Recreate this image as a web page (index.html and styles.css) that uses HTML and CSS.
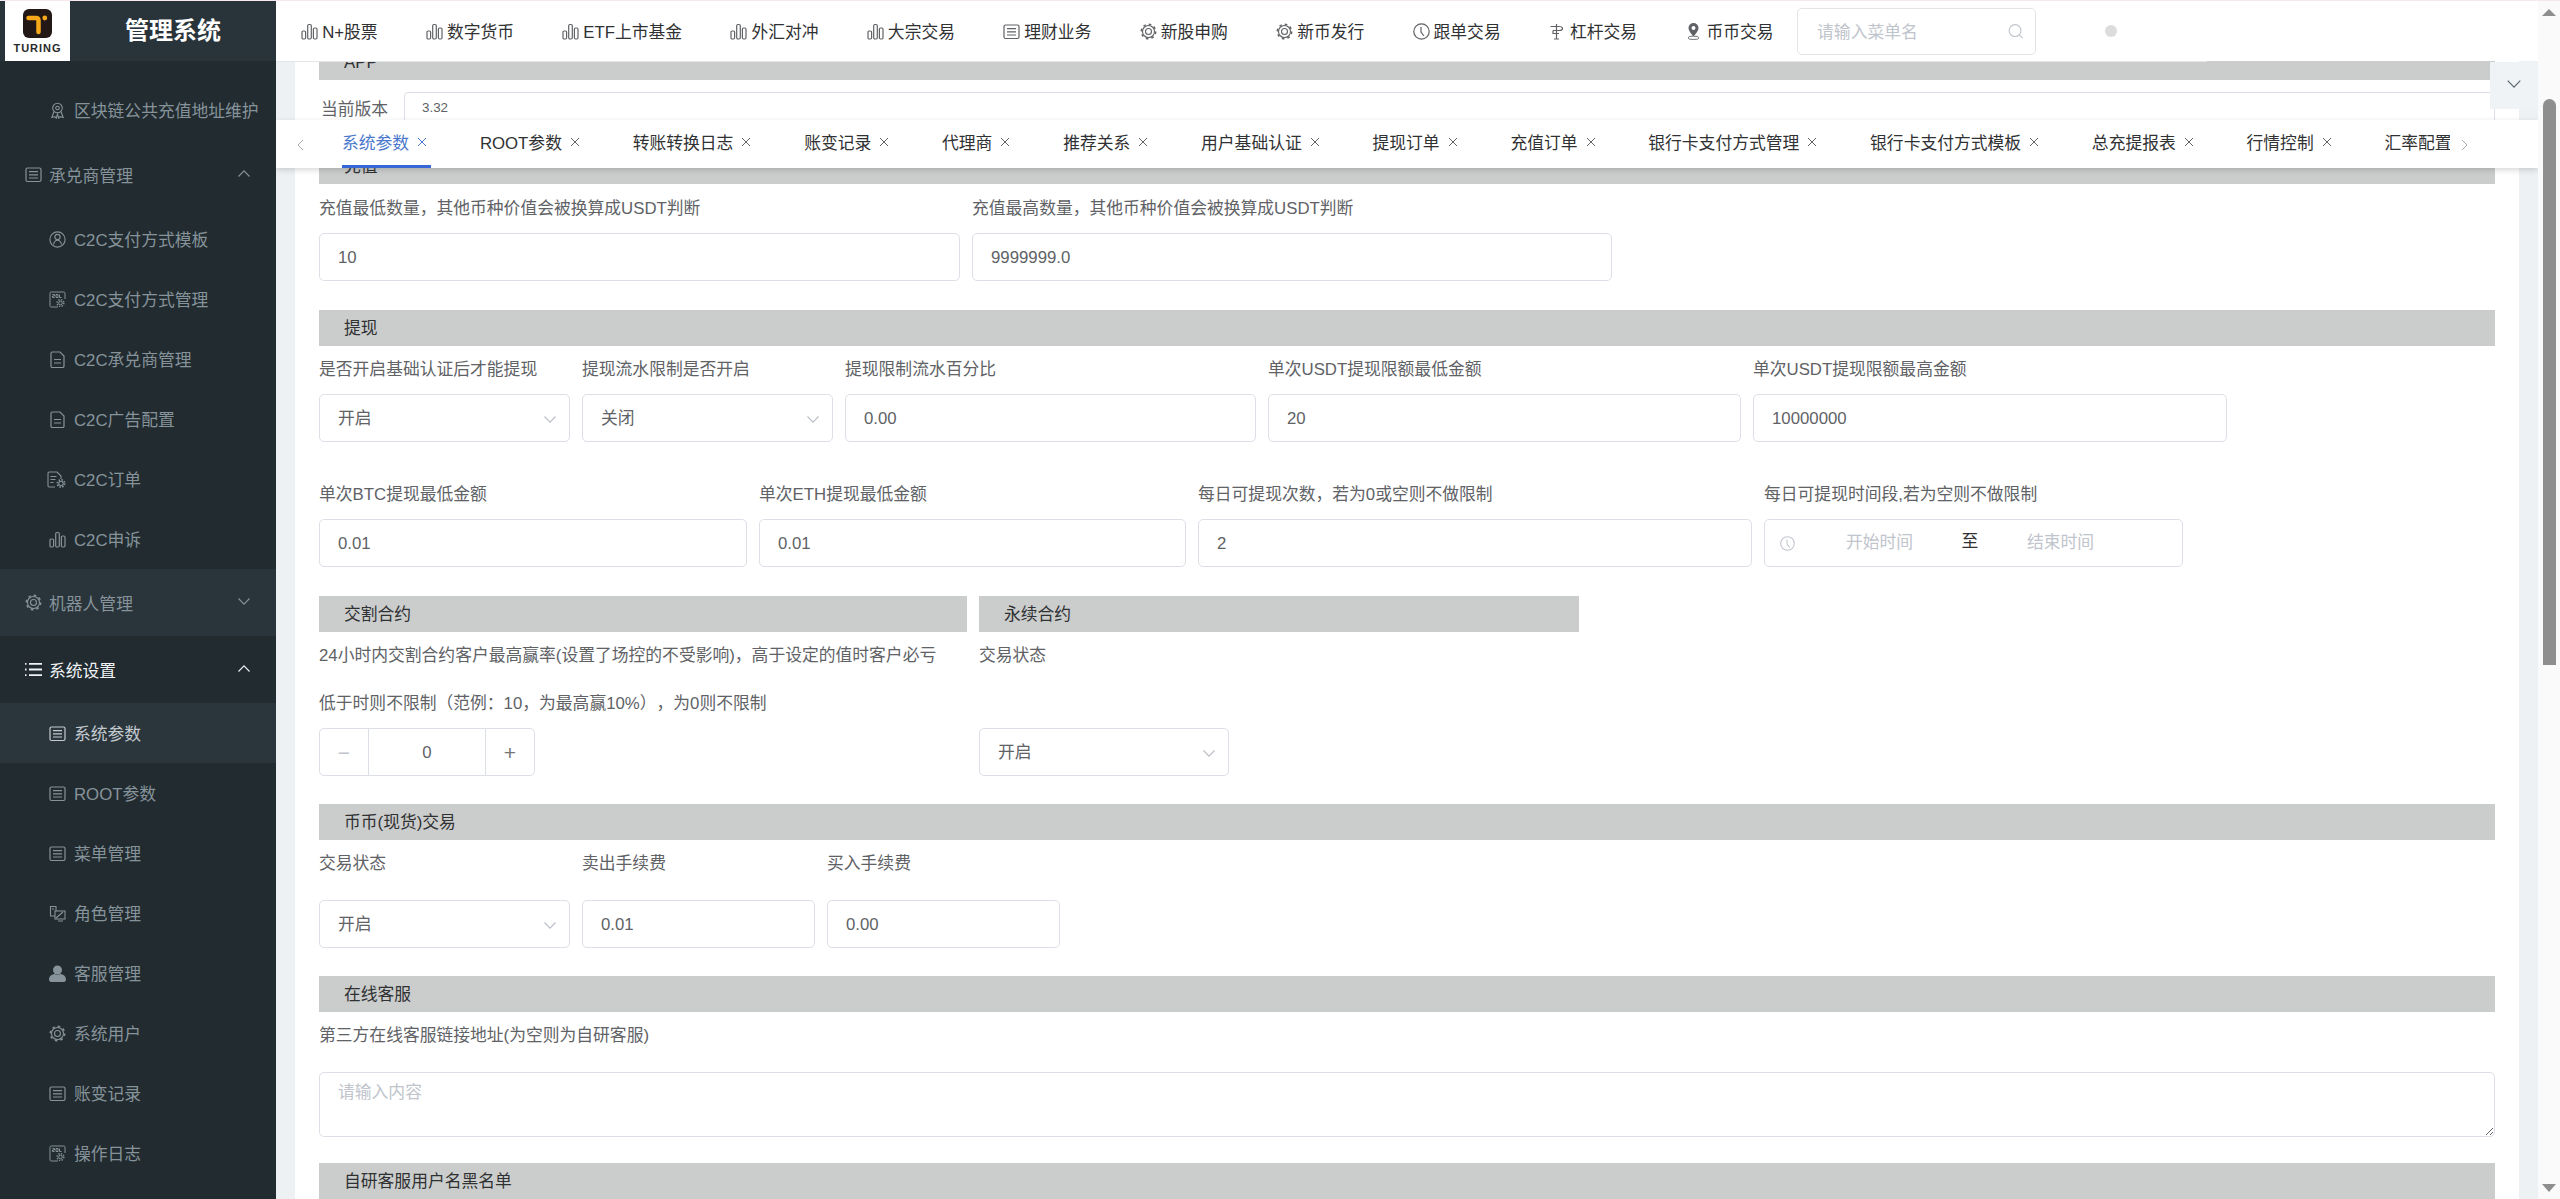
FILE: index.html
```html
<!DOCTYPE html>
<html lang="zh-CN">
<head>
  <meta charset="UTF-8">
  <title>管理系统</title>
  <link rel="stylesheet" href="styles.css">
</head>
<body>
  <svg class="defs" width="0" height="0">
    <symbol id="i-bars" viewBox="0 0 17 17"><g fill="none" stroke="currentColor" stroke-width="1.2"><rect x="1" y="8" width="3.6" height="8" rx="1.2"/><rect x="6.7" y="1.5" width="3.6" height="14.5" rx="1.2"/><rect x="12.4" y="5" width="3.6" height="11" rx="1.2"/></g></symbol>
    <symbol id="i-list" viewBox="0 0 17 17"><g fill="none" stroke="currentColor" stroke-width="1.2"><rect x="1" y="2" width="15" height="13.5" rx="1.5"/><path d="M4 5.6h9M4 8.8h9M4 12h9"/></g></symbol>
    <symbol id="i-doc" viewBox="0 0 17 17"><g fill="none" stroke="currentColor" stroke-width="1.2"><path d="M2 2.2c0-.7.5-1.2 1.2-1.2H11l4 4v10.3c0 .7-.5 1.2-1.2 1.2H3.200c-.7 0-1.200-.5-1.200-1.200z"/><path d="M5 8.500h7M5 12h7"/></g></symbol>
    <symbol id="i-docgear" viewBox="0 0 20 17"><g fill="none" stroke="currentColor" stroke-width="1.1"><path d="M8 16H2.200C1.500 16 1 15.500 1 14.800V2.200C1 1.500 1.500 1 2.200 1H10l4 4v3"/><path d="M3.500 5.500h6M3.500 8.500h5M3.500 11.500h3"/><circle cx="14" cy="12.500" r="2.200"/><circle cx="14" cy="12.500" r="3.700" stroke-width="1.600" stroke-dasharray="1.500 1.400"/></g></symbol>
    <symbol id="i-gear" viewBox="0 0 17 17"><g fill="none" stroke="currentColor"><circle cx="8.500" cy="8.500" r="3" stroke-width="1.100"/><circle cx="8.500" cy="8.500" r="6" stroke-width="1.100"/><circle cx="8.500" cy="8.500" r="7.200" stroke-width="1.500" stroke-dasharray="2.600 3.055"/></g></symbol>
    <symbol id="i-medal" viewBox="0 0 17 17"><g fill="none" stroke="currentColor" stroke-width="1.100"><circle cx="8.500" cy="6" r="4.800"/><circle cx="8.500" cy="6" r="1.800"/><path d="M5 9.500L2.800 15.500l3-.8 1.500 1.500L8.500 12l1.200 4.200 1.500-1.500 3 .8L12 9.500"/></g></symbol>
    <symbol id="i-person" viewBox="0 0 17 17"><g fill="none" stroke="currentColor" stroke-width="1.100"><circle cx="8.500" cy="8.500" r="7.600"/><circle cx="8.500" cy="6" r="2.600"/><path d="M4.500 13.500c.6-2.600 2.100-4.200 4-4.200s3.400 1.600 4 4.200"/></g></symbol>
    <symbol id="i-sql" viewBox="0 0 17 17"><g fill="none" stroke="currentColor" stroke-width="1"><path d="M9 16H2.200C1.500 16 1 15.500 1 14.800V2.200C1 1.500 1.500 1 2.200 1h12.600c.7 0 1.200.5 1.200 1.200V8"/><path d="M3.500 3.500h2v1.500h-2v1.500h2M7 3.500h2v3H7zM10.500 3.500v3h2"/><circle cx="11.500" cy="12" r="1.800"/><circle cx="11.500" cy="12" r="3.400" stroke-width="1.400" stroke-dasharray="1.400 1.270"/></g></symbol>
    <symbol id="i-role" viewBox="0 0 17 17"><g fill="none" stroke="currentColor" stroke-width="1.100"><path d="M6 11H1.500V1.500h5.500V6"/><rect x="6" y="6" width="10" height="8"/><path d="M7 13l7-6M9 16h5M3 4h2"/></g></symbol>
    <symbol id="i-user" viewBox="0 0 17 17"><circle cx="8.500" cy="5" r="4.500" fill="currentColor"/><path d="M0 14.500C0 11 3 9.300 5.500 9c1.800 1.100 4.200 1.100 6 0 2.500.3 5.500 2 5.500 5.500 0 1.400-1 2.500-2 2.500H2c-1 0-2-1.100-2-2.500z" fill="currentColor"/></symbol>
    <symbol id="i-clock" viewBox="0 0 17 17"><g fill="none" stroke="currentColor" stroke-width="1.200"><circle cx="8.500" cy="8.500" r="7.700"/><path d="M8 4v5l3 4"/></g></symbol>
    <symbol id="i-lever" viewBox="0 0 17 17"><g fill="none" stroke="currentColor" stroke-width="1.200"><path d="M7.500 1v15M5 16h5M1.500 3.500h8.500c2 0 3.500.8 3.500 2s-1.500 2-3.500 2H4M4 7.500v3h6"/></g></symbol>
    <symbol id="i-pin" viewBox="0 0 17 17"><path d="M8.500 0a5 5 0 0 0-5 5c0 3 3.500 6.500 5 8.500 1.500-2 5-5.500 5-8.500a5 5 0 0 0-5-5zm0 3a2 2 0 1 1 0 4 2 2 0 0 1 0-4z" fill="currentColor"/><ellipse cx="8.500" cy="14.800" rx="5.500" ry="1.700" fill="none" stroke="currentColor" stroke-width=".9"/></symbol>
    <symbol id="i-close" viewBox="0 0 10 10"><path d="M1 1l8 8M9 1L1 9" fill="none" stroke="currentColor" stroke-width="1"/></symbol>
    <symbol id="i-down" viewBox="0 0 12 7"><path d="M.5.500L6 6.200 11.500.5" fill="none" stroke="currentColor" stroke-width="1.100"/></symbol>
    <symbol id="i-up" viewBox="0 0 12 7"><path d="M.5 6.500L6 .8l5.500 5.700" fill="none" stroke="currentColor" stroke-width="1.100"/></symbol>
    <symbol id="i-left" viewBox="0 0 7 12"><path d="M6 1L1 6l5 5" fill="none" stroke="currentColor" stroke-width="1"/></symbol>
    <symbol id="i-right" viewBox="0 0 7 12"><path d="M1 1l5 5-5 5" fill="none" stroke="currentColor" stroke-width="1"/></symbol>
    <symbol id="i-search" viewBox="0 0 17 17"><g fill="none" stroke="currentColor" stroke-width="1.200"><circle cx="7.500" cy="7.500" r="6.300"/><path d="M12 12l3.500 3.500"/></g></symbol>
  </svg>

  <div class="topline"></div>

  <div class="app">
    <aside class="side">
      <div class="brand">
        <div class="logo">
          <svg class="logo-mark" viewBox="0 0 29 29">
            <rect width="29" height="29" rx="6" fill="#231815"/>
            <path d="M5.500 9H13c1.500 0 2.500 1 2.500 2.500V23" fill="none" stroke="#f9a81a" stroke-width="4.500" stroke-linecap="round"/>
            <circle cx="21.800" cy="9" r="2.400" fill="#f9a81a"/>
          </svg>
          <span class="logo-name">TURING</span>
        </div>
        <div class="brand-title">管理系统</div>
      </div>

      <ul class="menu">
        <li class="child"><svg class="ic"><use href="#i-medal"/></svg>区块链公共充值地址维护</li>
        <li class="parent first"><svg class="ic"><use href="#i-list"/></svg>承兑商管理<svg class="chev"><use href="#i-up"/></svg></li>
        <li class="child"><svg class="ic"><use href="#i-person"/></svg>C2C支付方式模板</li>
        <li class="child"><svg class="ic"><use href="#i-sql"/></svg>C2C支付方式管理</li>
        <li class="child"><svg class="ic"><use href="#i-doc"/></svg>C2C承兑商管理</li>
        <li class="child"><svg class="ic"><use href="#i-doc"/></svg>C2C广告配置</li>
        <li class="child"><svg class="ic ic-wide"><use href="#i-docgear"/></svg>C2C订单</li>
        <li class="child"><svg class="ic"><use href="#i-bars"/></svg>C2C申诉</li>
        <li class="parent hover"><svg class="ic"><use href="#i-gear"/></svg>机器人管理<svg class="chev"><use href="#i-down"/></svg></li>
        <li class="parent open">
          <svg class="ic" viewBox="0 0 17 17"><path d="M0 2h1.500v1.800H0zM4 2h13v1.800H4zM0 7.600h1.500v1.800H0zM4 7.600h13v1.800H4zM0 13.200h1.500V15H0zM4 13.200h13V15H4z" fill="currentColor"/></svg>
          系统设置<svg class="chev"><use href="#i-up"/></svg>
        </li>
        <li class="child active"><svg class="ic"><use href="#i-list"/></svg>系统参数</li>
        <li class="child"><svg class="ic"><use href="#i-list"/></svg>ROOT参数</li>
        <li class="child"><svg class="ic"><use href="#i-list"/></svg>菜单管理</li>
        <li class="child"><svg class="ic"><use href="#i-role"/></svg>角色管理</li>
        <li class="child"><svg class="ic"><use href="#i-user"/></svg>客服管理</li>
        <li class="child"><svg class="ic"><use href="#i-gear"/></svg>系统用户</li>
        <li class="child"><svg class="ic"><use href="#i-list"/></svg>账变记录</li>
        <li class="child"><svg class="ic"><use href="#i-sql"/></svg>操作日志</li>
      </ul>
    </aside>

    <div class="main">
      <header class="topbar">
        <a class="nav-item nav-first"><svg class="ic"><use href="#i-bars"/></svg>N+股票</a>
        <a class="nav-item"><svg class="ic"><use href="#i-bars"/></svg>数字货币</a>
        <a class="nav-item"><svg class="ic"><use href="#i-bars"/></svg>ETF上市基金</a>
        <a class="nav-item"><svg class="ic"><use href="#i-bars"/></svg>外汇对冲</a>
        <a class="nav-item"><svg class="ic"><use href="#i-bars"/></svg>大宗交易</a>
        <a class="nav-item"><svg class="ic"><use href="#i-list"/></svg>理财业务</a>
        <a class="nav-item"><svg class="ic"><use href="#i-gear"/></svg>新股申购</a>
        <a class="nav-item"><svg class="ic"><use href="#i-gear"/></svg>新币发行</a>
        <a class="nav-item"><svg class="ic"><use href="#i-clock"/></svg>跟单交易</a>
        <a class="nav-item"><svg class="ic"><use href="#i-lever"/></svg>杠杆交易</a>
        <a class="nav-item"><svg class="ic"><use href="#i-pin"/></svg>币币交易</a>
        <div class="search">
          <span class="search-text">请输入菜单名</span>
          <svg class="search-ic"><use href="#i-search"/></svg>
        </div>
        <span class="dot"></span>
      </header>

      <button class="collapse"><svg><use href="#i-down"/></svg></button>

      <div class="tabs">
        <svg class="tab-arrow tab-prev"><use href="#i-left"/></svg>
        <div class="tab-strip">
          <span class="tab active">系统参数<svg class="x"><use href="#i-close"/></svg></span>
          <span class="tab">ROOT参数<svg class="x"><use href="#i-close"/></svg></span>
          <span class="tab">转账转换日志<svg class="x"><use href="#i-close"/></svg></span>
          <span class="tab">账变记录<svg class="x"><use href="#i-close"/></svg></span>
          <span class="tab">代理商<svg class="x"><use href="#i-close"/></svg></span>
          <span class="tab">推荐关系<svg class="x"><use href="#i-close"/></svg></span>
          <span class="tab">用户基础认证<svg class="x"><use href="#i-close"/></svg></span>
          <span class="tab">提现订单<svg class="x"><use href="#i-close"/></svg></span>
          <span class="tab">充值订单<svg class="x"><use href="#i-close"/></svg></span>
          <span class="tab">银行卡支付方式管理<svg class="x"><use href="#i-close"/></svg></span>
          <span class="tab">银行卡支付方式模板<svg class="x"><use href="#i-close"/></svg></span>
          <span class="tab">总充提报表<svg class="x"><use href="#i-close"/></svg></span>
          <span class="tab">行情控制<svg class="x"><use href="#i-close"/></svg></span>
          <span class="tab">汇率配置<svg class="x"><use href="#i-close"/></svg></span>
        </div>
        <svg class="tab-arrow tab-next"><use href="#i-right"/></svg>
      </div>

      <main class="card">
        <div class="bar">APP</div>
        <div class="app-row">
          <span class="app-label">当前版本</span>
          <div class="app-input">3.32</div>
        </div>

        <div class="bar bar-pay">充值</div>
        <div class="row">
          <div class="field w-641"><label>充值最低数量，其他币种价值会被换算成USDT判断</label><div class="input">10</div></div>
          <div class="field w-640"><label>充值最高数量，其他币种价值会被换算成USDT判断</label><div class="input">9999999.0</div></div>
        </div>

        <div class="bar">提现</div>
        <div class="row">
          <div class="field w-251"><label>是否开启基础认证后才能提现</label><div class="input select">开启<svg class="caret"><use href="#i-down"/></svg></div></div>
          <div class="field w-251"><label>提现流水限制是否开启</label><div class="input select">关闭<svg class="caret"><use href="#i-down"/></svg></div></div>
          <div class="field w-411"><label>提现限制流水百分比</label><div class="input">0.00</div></div>
          <div class="field w-473"><label>单次USDT提现限额最低金额</label><div class="input">20</div></div>
          <div class="field w-474"><label>单次USDT提现限额最高金额</label><div class="input">10000000</div></div>
        </div>
        <div class="row">
          <div class="field w-428"><label>单次BTC提现最低金额</label><div class="input">0.01</div></div>
          <div class="field w-427"><label>单次ETH提现最低金额</label><div class="input">0.01</div></div>
          <div class="field w-554"><label>每日可提现次数，若为0或空则不做限制</label><div class="input">2</div></div>
          <div class="field w-419">
            <label>每日可提现时间段,若为空则不做限制</label>
            <div class="input range">
              <svg class="range-ic"><use href="#i-clock"/></svg>
              <span class="range-text">开始时间</span>
              <span class="range-sep">至</span>
              <span class="range-text">结束时间</span>
            </div>
          </div>
        </div>

        <div class="row row-28">
          <div class="col w-648">
            <div class="bar">交割合约</div>
            <label class="lbl">24小时内交割合约客户最高赢率(设置了场控的不受影响)，高于设定的值时客户必亏<br>低于时则不限制（范例：10，为最高赢10%），为0则不限制</label>
            <div class="stepper">
              <span class="step step-off">−</span>
              <span class="step-val">0</span>
              <span class="step">+</span>
            </div>
          </div>
          <div class="col w-600">
            <div class="bar">永续合约</div>
            <label class="lbl lbl-2">交易状态</label>
            <div class="input select w-250">开启<svg class="caret"><use href="#i-down"/></svg></div>
          </div>
        </div>

        <div class="bar">币币(现货)交易</div>
        <div class="row row-28">
          <div class="field w-251"><label class="lbl-60">交易状态</label><div class="input select">开启<svg class="caret"><use href="#i-down"/></svg></div></div>
          <div class="field w-233"><label class="lbl-60">卖出手续费</label><div class="input">0.01</div></div>
          <div class="field w-233"><label class="lbl-60">买入手续费</label><div class="input">0.00</div></div>
        </div>

        <div class="bar">在线客服</div>
        <div class="row row-26">
          <div class="field w-full"><label class="lbl-60">第三方在线客服链接地址(为空则为自研客服)</label><textarea class="area" placeholder="请输入内容"></textarea></div>
        </div>

        <div class="bar">自研客服用户名黑名单</div>
      </main>
    </div>

    <div class="sbar">
      <span class="sbar-up"></span>
      <span class="sbar-thumb"></span>
      <span class="sbar-down"></span>
    </div>
  </div>
</body>
</html>
```

FILE: styles.css
```css
* { box-sizing: border-box; }
html, body { margin: 0; height: 1199px; overflow: hidden; }
body {
  font-family: "Liberation Sans", "Noto Sans CJK SC", sans-serif;
  font-size: 16.8px;
  color: #606266;
  background: #fff;
  text-spacing-trim: space-all;
}
.defs { position: absolute; }
.topline {
  position: absolute;
  top: 0; left: 0; right: 0;
  height: 1px;
  background: #f6e7ee;
  z-index: 9;
}
.app { display: flex; width: 2560px; height: 1199px; }
.ic { width: 17px; height: 17px; flex: none; }
.ic-wide { width: 20px; margin-left: -2px; margin-right: -1px; }

/* sidebar */
.side { width: 276px; flex: none; background: #212b30; color: #87939a; }
.brand { display: flex; align-items: center; height: 61px; padding-left: 5px; background: #29333a; }
.logo {
  width: 65px;
  height: 60px;
  margin-top: 1px;
  background: #fff;
  display: flex;
  flex-direction: column;
  align-items: center;
  padding-top: 8px;
}
.logo-mark { width: 29px; height: 29px; }
.logo-name { margin-top: 4px; font-size: 11px; font-weight: bold; line-height: 12px; letter-spacing: 1px; color: #2a2a2a; }
.brand-title { margin-left: 55px; font-size: 24px; font-weight: bold; color: #fff; line-height: 30px; }
.menu { list-style: none; margin: 0; padding: 19px 0 0; }
.child { display: flex; align-items: center; gap: 8px; height: 60px; padding-left: 49px; }
.child.active { background: #2b353c; color: #c3cbd0; }
.parent { display: flex; align-items: center; gap: 7px; height: 67px; padding: 0 26px 0 25px; }
.parent.first { margin-top: 2px; padding-bottom: 2px; }
.parent.hover { background: #2a343b; }
.parent.open { color: #f0f3f5; }
.chev { width: 12px; height: 7px; margin-left: auto; margin-top: -3px; }

/* right part */
.main { position: relative; flex: 1; min-width: 0; padding: 0 19px; background: #eef1f3; overflow: hidden; }
.card { height: 100%; padding: 44px 24px 0; background: #fff; }

.topbar {
  position: absolute;
  top: 1px; left: 0; right: 0;
  height: 60px;
  display: flex;
  align-items: center;
  background: #fff;
  z-index: 3;
}
.topbar::after {
  content: "";
  position: absolute;
  left: 0; top: 60px;
  width: 1931px;
  height: 1px;
  background: #e3e5e6;
}
.nav-item { display: flex; align-items: center; gap: 4px; padding: 0 24.150px; color: #303133; white-space: nowrap; }
.nav-first { margin-left: 1px; }
.nav-item .ic { color: #606266; }
.search {
  display: flex;
  align-items: center;
  justify-content: space-between;
  width: 239px;
  height: 47px;
  margin-left: -.6px;
  padding: 0 11px 0 19px;
  border: 1px solid #e2e4e8;
  border-radius: 5px;
}
.search-text { color: #c0c4cc; }
.search-ic { width: 16px; height: 17px; color: #c0c4cc; }
.dot { width: 12px; height: 12px; margin-left: 69px; border-radius: 50%; background: #dcdcdc; }

.collapse {
  position: absolute;
  top: 62px; right: 0;
  width: 48px;
  height: 47px;
  padding: 0;
  border: 0;
  background: #f0f3f5;
  color: #5d6a73;
  z-index: 2;
}
.collapse svg { width: 14px; height: 8px; display: block; margin: 0 auto 4px; }

.tabs {
  position: absolute;
  top: 120px; left: 0; right: 0;
  height: 48px;
  display: flex;
  align-items: flex-start;
  background: #fff;
  box-shadow: 0 2px 6px rgba(0, 0, 0, .16);
  z-index: 3;
}
.tab-arrow { width: 7px; height: 12px; flex: none; margin-top: 19px; color: #a8abb2; }
.tab-prev { margin-left: 21px; margin-right: 38px; }
.tab-next { margin-left: 11px; }
.tab-strip { flex: none; width: 2108px; height: 48px; display: flex; gap: 48.750px; overflow: hidden; }
.tab { flex: none; display: flex; align-items: center; height: 48px; padding-bottom: 5px; color: #303133; white-space: nowrap; }
.tab .x { width: 10px; height: 10px; margin: 0 4px 0 8px; color: #606266; }
.tab.active { color: #4a78cc; border-bottom: 3px solid #3767d6; padding-bottom: 2px; }
.tab.active .x { color: #4a78cc; }

.bar {
  height: 36px;
  padding-left: 25px;
  line-height: 37px;
  color: #303133;
  background: #cbcdcc;
}
.bar-pay { margin-bottom: 1px; }
.app-row { display: flex; align-items: center; margin: 12px 0 24px 2px; }
.app-label { width: 83px; flex: none; }
.app-input {
  flex: 1;
  height: 32px;
  padding-left: 17px;
  line-height: 30px;
  font-size: 13.400px;
  border: 1px solid #dcdfe6;
  border-radius: 4px;
}
.row { display: flex; gap: 12px; margin-bottom: 29px; }
.row-28 { margin-bottom: 28px; }
.row-26 { margin-bottom: 26px; }
.field label { display: block; line-height: 48px; white-space: nowrap; }
.field label.lbl-60 { height: 60px; }
.lbl { display: block; line-height: 48px; white-space: nowrap; }
.lbl-2 { height: 96px; }
.input {
  position: relative;
  height: 48px;
  padding-left: 18px;
  line-height: 48px;
  border: 1px solid #dcdfe6;
  border-radius: 5px;
  background: #fff;
}
.caret { position: absolute; right: 13px; top: 21px; width: 12px; height: 7px; color: #b9bdc5; }
.range { display: flex; align-items: center; padding-left: 15px; color: #c0c4cc; }
.range-ic { width: 15px; height: 15px; margin-right: 3px; }
.range-text { width: 163px; text-align: center; }
.range-sep { width: 18px; text-align: center; color: #303133; margin-top: -2px; }
.stepper {
  display: flex;
  width: 216px;
  height: 48px;
  border: 1px solid #dcdfe6;
  border-radius: 5px;
  line-height: 47px;
  text-align: center;
}
.step { width: 48px; font-size: 21px; font-weight: 300; color: #757779; }
.step-off { color: #c0c4cc; }
.step-val { flex: 1; border-left: 1px solid #dcdfe6; border-right: 1px solid #dcdfe6; }
.area {
  display: block;
  width: 100%;
  height: 65px;
  padding: 7px 18px;
  font: inherit;
  line-height: 25px;
  color: #606266;
  border: 1px solid #dcdfe6;
  border-radius: 5px;
  resize: vertical;
  outline: 0;
}
.area::placeholder { color: #c0c4cc; }

.w-full { width: 100%; }
.w-233 { width: 233px; }
.w-250 { width: 250px; }
.w-251 { width: 251px; }
.w-411 { width: 411px; }
.w-419 { width: 419px; }
.w-427 { width: 427px; }
.w-428 { width: 428px; }
.w-473 { width: 473px; }
.w-474 { width: 474px; }
.w-554 { width: 554px; }
.w-600 { width: 600px; }
.w-640 { width: 640px; }
.w-641 { width: 641px; }
.w-648 { width: 648px; }

/* page scrollbar */
.sbar {
  width: 22px;
  flex: none;
  display: flex;
  flex-direction: column;
  align-items: center;
  padding: 9px 0 7px;
  background: #fafafa;
}
.sbar-up { width: 0; height: 0; border: solid transparent; border-width: 0 7px 7px; border-bottom-color: #8e8e8e; }
.sbar-thumb { width: 13px; height: 566px; margin-top: 83px; border-radius: 7px 7px 0 0; background: #8e8e8e; }
.sbar-down { width: 0; height: 0; margin-top: auto; border: solid transparent; border-width: 8px 7px 0; border-top-color: #8e8e8e; }
```
